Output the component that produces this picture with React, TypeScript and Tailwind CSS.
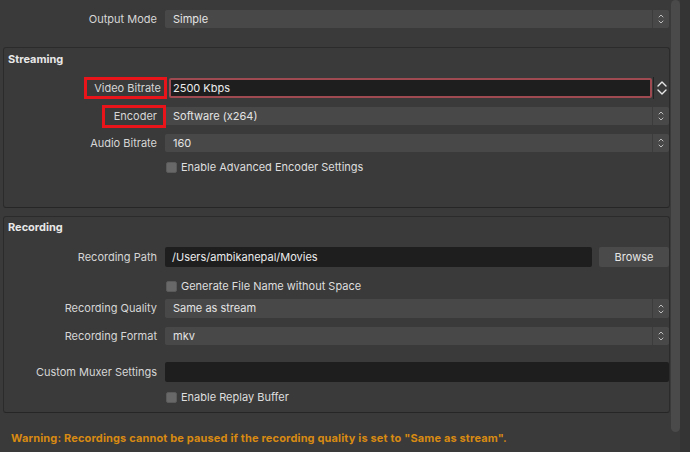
import React from "react";

const font = { fontFamily: "Inter, 'Noto Sans', 'Liberation Sans', sans-serif" };

function Chevrons({ big = false }: { big?: boolean }) {
  if (big) {
    return (
      <svg width="12" height="20" viewBox="0 0 12 20" fill="none" stroke="#e6e6e6" strokeWidth="1.4" strokeLinecap="round" strokeLinejoin="round">
        <path d="M2 8 L6 4 L10 8" />
        <path d="M2 12 L6 16 L10 12" />
      </svg>
    );
  }
  return (
    <svg width="8" height="14" viewBox="0 0 8 14" fill="none" stroke="#bdbdbd" strokeWidth="1" strokeLinecap="round" strokeLinejoin="round">
      <path d="M2 5 L4 3 L6 5" />
      <path d="M2 9 L4 11 L6 9" />
    </svg>
  );
}

function Select({ value, h = "h-[18px]" }: { value: string; h?: string }) {
  return (
    <div className={`flex flex-1 ${h} bg-[#484848] rounded-[2px] items-stretch`}>
      <div className="flex-1 flex items-center pl-[8px] text-[11px] text-[#e4e4e4]">{value}</div>
      <div className="w-[1px] bg-[#3c3c3c]" />
      <div className="w-[16px] flex items-center justify-center">
        <Chevrons />
      </div>
    </div>
  );
}

function Label({ text, w }: { text: string; w: string }) {
  return (
    <div className={`${w} shrink-0 flex justify-end items-center pr-[8px] text-[11px] text-[#d6d6d6]`}>
      <span>{text}</span>
    </div>
  );
}

function Check({ text }: { text: string }) {
  return (
    <div className="flex items-center gap-[4px] text-[11px] text-[#dedede]">
      <div className="ml-[1px] w-[11px] h-[11px] rounded-[2px] bg-[#686868] border border-[#5a5a5a]" />
      <span>{text}</span>
    </div>
  );
}

export default function App() {
  return (
    <div style={font} className="w-[690px] h-[452px] bg-[#3a3a3a] flex overflow-hidden">
      <div className="w-[671px] flex flex-col pt-[10px]">
        {/* Output Mode */}
        <div className="flex h-[18px] pr-[2px]">
          <Label text="Output Mode" w="w-[165px]" />
          <Select value="Simple" />
        </div>

        {/* Streaming */}
        <div className="ml-[3px] mr-[1px] mt-[19px] h-[161px] border border-[#2b2b2b] border-b-[#262626] rounded-[3px] flex flex-col">
          <div className="mt-[3px] h-[16px] flex items-center pl-[4px] text-[11px] font-bold text-[#e8e8e8]">Streaming</div>
          <div className="mt-[10px] h-[22px] flex items-center relative">
            <Label text="Video Bitrate" w="w-[165px]" />
            <div className="absolute left-[80px] w-[83px] top-0 h-[22px] border-[3px] border-[#e8141a]" />
            <div className="flex-1 h-[20px] bg-[#1e1e1e] border-2 border-[#9e4a50] rounded-[2px] flex items-center pl-[2px] text-[11px] text-[#ececec]">
              2500 Kbps
            </div>
            <div className="w-[1px] h-[22px] bg-[#222] ml-[1px]" />
            <div className="w-[14px] flex justify-center ml-[1px]">
              <Chevrons big />
            </div>
          </div>
          <div className="mt-[6px] h-[22px] flex items-center relative">
            <Label text="Encoder" w="w-[161px]" />
            <div className="absolute left-[98px] w-[64px] top-0 h-[23px] border-[3px] border-[#e8141a]" />
            <Select value="Software (x264)" />
          </div>
          <div className="mt-[7px] h-[18px] flex">
            <Label text="Audio Bitrate" w="w-[161px]" />
            <Select value="160" />
          </div>
          <div className="mt-[7px] h-[16px] flex">
            <div className="w-[161px] shrink-0" />
            <Check text="Enable Advanced Encoder Settings" />
          </div>
        </div>

        {/* Recording */}
        <div className="ml-[3px] mr-[1px] mt-[8px] h-[197px] border border-[#2b2b2b] border-b-[#262626] rounded-[3px] flex flex-col">
          <div className="mt-[2px] h-[16px] flex items-center pl-[4px] text-[11px] font-bold text-[#e8e8e8]">Recording</div>
          <div className="mt-[12px] h-[20px] flex">
            <Label text="Recording Path" w="w-[161px]" />
            <div className="w-[427px] h-[20px] bg-[#1e1e1e] rounded-[2px] flex items-center pl-[7px] text-[11px] text-[#ececec]">
              /Users/ambikanepal/Movies
            </div>
            <div className="ml-[7px] flex-1 h-[20px] bg-[#4a4a4a] rounded-[2px] flex items-center justify-center text-[11px] text-[#e6e6e6]">
              Browse
            </div>
          </div>
          <div className="mt-[11px] h-[16px] flex">
            <div className="w-[161px] shrink-0" />
            <Check text="Generate File Name without Space" />
          </div>
          <div className="mt-[5px] h-[19px] flex">
            <Label text="Recording Quality" w="w-[161px]" />
            <Select value="Same as stream" h="h-[19px]" />
          </div>
          <div className="mt-[9px] h-[18px] flex">
            <Label text="Recording Format" w="w-[161px]" />
            <Select value="mkv" />
          </div>
          <div className="mt-[17px] h-[20px] flex">
            <Label text="Custom Muxer Settings" w="w-[161px]" />
            <div className="flex-1 h-[20px] bg-[#1e1e1e] rounded-[2px]" />
          </div>
          <div className="mt-[7px] h-[16px] flex">
            <div className="w-[161px] shrink-0" />
            <Check text="Enable Replay Buffer" />
          </div>
        </div>

        <div className="mt-[17px] h-[16px] flex items-center pl-[11px] text-[11px] font-bold text-[#d88a12] tracking-[0.15px]">
          Warning: Recordings cannot be paused if the recording quality is set to "Same as stream".
        </div>
      </div>
      <div className="w-[9px] h-[432px] bg-[#4a4a4a] rounded-[5px]" />
      <div className="flex-1 bg-[#343434]" />
    </div>
  );
}
